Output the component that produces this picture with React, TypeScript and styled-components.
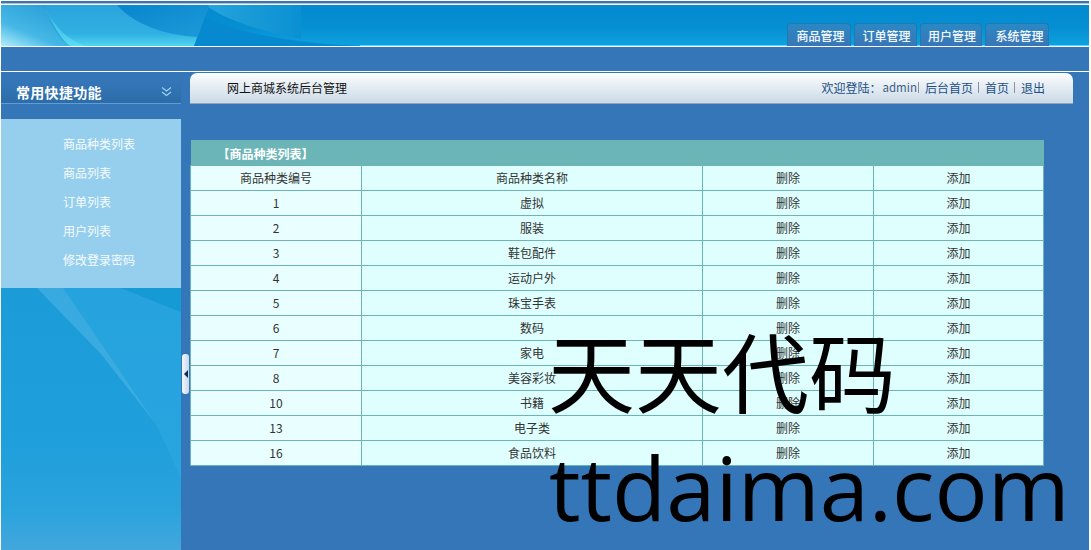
import React from 'react';
import styled, { createGlobalStyle } from 'styled-components';

const GlobalStyle = createGlobalStyle`
  html, body {
    margin: 0;
    padding: 0;
    background: #fff;
  }
  body {
    font-family: "Noto Sans CJK SC", "Open Sans", sans-serif;
    font-size: 12px;
  }
`;

const Page = styled.div`
  position: relative;
  width: 1088px;
  height: 550px;
  margin-left: 1px;
  overflow: hidden;
  background: #3476b8;
  display: flex;
  flex-direction: column;
`;

const TopEdge = styled.div`
  height: 1px;
  margin: 3px -1px 1px;
  background: #bdbdbd;
  box-shadow: 0 -3px 0 #fff, 0 1px 0 #fff;
`;

const Banner = styled.div`
  position: relative;
  height: 41px;
  flex: none;
  background: linear-gradient(#0489cf 0%, #058fd3 55%, #0fa2de 100%);
  border-bottom: 1px solid #fff;
  display: flex;
  justify-content: flex-end;
  align-items: flex-end;
  padding-right: 40px;
  gap: 3px;
`;

const BannerArt = styled.svg`
  position: absolute;
  left: 0;
  top: 0;
  width: 360px;
  height: 41px;
`;

const BannerGlow = styled.div`
  position: absolute;
  left: 359px;
  right: 0;
  bottom: 0;
  height: 1px;
  background: #5fd0f5;
`;

const NavTab = styled.a<{ $w: number; $shift: number }>`
  position: relative;
  width: ${p => p.$w}px;
  height: 23px;
  box-sizing: border-box;
  border: 1px solid #1a7cb6;
  border-bottom: 0;
  border-radius: 4px 4px 0 0;
  padding-left: ${p => p.$shift}px;
  background: linear-gradient(#2a88c4, #3a76b6);
  color: #fff;
  font-size: 12px;
  line-height: 24px;
  text-align: center;
  text-shadow: 0 0 1px rgba(255, 255, 255, 0.5);
`;

const SubBand = styled.div`
  height: 24px;
  flex: none;
  border-bottom: 1px solid #fff;
`;

const Body = styled.div`
  flex: 1;
  min-height: 0;
  display: grid;
  grid-template-columns: 180px 9px 1fr;
`;

const Sidebar = styled.aside`
  display: flex;
  flex-direction: column;
`;

const SideHead = styled.div`
  height: 32px;
  flex: none;
  display: flex;
  align-items: center;
  justify-content: space-between;
  padding: 8px 9px 0 15px;
  box-sizing: border-box;
  background: linear-gradient(#3476b8 30%, #2c6ca8 100%);
  border-bottom: 1px solid #5b9fd6;
`;

const SideTitle = styled.span`
  color: #fff;
  font-size: 14px;
  font-weight: 700;
  line-height: 20px;
  letter-spacing: 0.3px;
`;

const SideGap = styled.div`
  height: 15px;
  flex: none;
`;

const Menu = styled.ul`
  list-style: none;
  margin: 0;
  padding: 10px 0 0 62px;
  height: 169px;
  box-sizing: border-box;
  flex: none;
  background: #96cfee;
`;

const MenuItem = styled.li`
  height: 29px;
  line-height: 29px;
  color: #f7fcff;
  font-size: 12px;
`;

const SideArt = styled.div`
  flex: 1;
  position: relative;
  background: linear-gradient(#1b9cd9 0%, #1f9fdc 60%, #2ba3dd 85%, #43a7dd 100%);
`;

const SideArtSvg = styled.svg`
  position: absolute;
  left: 0;
  top: 0;
  width: 180px;
  height: 262px;
`;

const Splitter = styled.div`
  padding: 282px 0 0 1px;
`;

const Handle = styled.div`
  width: 7px;
  height: 40px;
  border-radius: 3px;
  background: linear-gradient(90deg, #f4f7fc, #c9d8ec);
  display: flex;
  align-items: center;
  justify-content: center;
`;

const Content = styled.main`
  padding-top: 1px;
  display: flex;
  flex-direction: column;
  align-items: flex-start;
`;

const TitleBar = styled.div`
  width: 883px;
  height: 31px;
  flex: none;
  box-sizing: border-box;
  border-radius: 7px 7px 0 0;
  border-bottom: 1px solid #8fa5bb;
  background: linear-gradient(#fbfdfd, #cbdae7);
  display: flex;
  align-items: center;
  justify-content: space-between;
  padding: 0 28px 2px 37px;
`;

const SiteName = styled.span`
  color: #111;
  font-size: 12px;
`;

const UserLinks = styled.div`
  display: flex;
  align-items: center;
  color: #1d4f86;
  font-size: 12px;
  white-space: nowrap;
`;

const UserName = styled.span`
  color: #3f5f88;
  font-size: 11.5px;
  margin-left: 1px;
`;

const Sep = styled.span<{ $tight?: boolean }>`
  width: 1px;
  height: 11px;
  background: #8c8f9e;
  margin: 0 6px 0 ${p => (p.$tight ? '1px' : '5px')};
`;

const Grid = styled.table`
  width: 853px;
  margin-top: 36px;
  border-collapse: collapse;
  table-layout: fixed;
  color: #333;
  font-size: 12px;
`;

const CaptionCell = styled.th`
  height: 25px;
  padding: 2px 0 0 27px;
  box-sizing: border-box;
  text-align: left;
  background: #6cb5b6;
  color: #fff;
  font-size: 12px;
  font-weight: 700;
`;

const Cell = styled.td<{ $first?: boolean }>`
  height: 25px;
  padding: 0;
  box-sizing: border-box;
  text-align: center;
  border: 1px solid #6cb5b6;
  background: ${p => (p.$first ? '#e9ffff' : '#dfffff')};
`;

const Watermark = styled.div`
  position: absolute;
  left: 547px;
  top: 313px;
  color: #000;
  pointer-events: none;
  white-space: nowrap;
`;

const WatermarkCn = styled.div`
  font-family: "Noto Sans CJK SC", sans-serif;
  font-size: 87px;
  line-height: 112px;
`;

const WatermarkEn = styled.div`
  font-family: "Open Sans", sans-serif;
  font-size: 88.5px;
  line-height: 123px;
  margin-left: 1px;
`;

const tabs = [
  { label: '商品管理', w: 64, shift: 3 },
  { label: '订单管理', w: 63, shift: 2 },
  { label: '用户管理', w: 62, shift: 2 },
  { label: '系统管理', w: 64, shift: 5 },
];

const menu = ['商品种类列表', '商品列表', '订单列表', '用户列表', '修改登录密码'];

const rows: [string, string][] = [
  ['1', '虚拟'],
  ['2', '服装'],
  ['3', '鞋包配件'],
  ['4', '运动户外'],
  ['5', '珠宝手表'],
  ['6', '数码'],
  ['7', '家电'],
  ['8', '美容彩妆'],
  ['10', '书籍'],
  ['13', '电子类'],
  ['16', '食品饮料'],
];

export default function App() {
  return (
    <>
      <GlobalStyle />
      <Page>
        <TopEdge />
        <Banner>
          <BannerArt viewBox="0 0 360 41" preserveAspectRatio="none">
            <defs>
              <linearGradient id="sweep" x1="0" y1="0" x2="0" y2="1">
                <stop offset="0" stopColor="#2aa4dc" />
                <stop offset="0.7" stopColor="#30b0e2" />
                <stop offset="1" stopColor="#52d4f0" />
              </linearGradient>
              <linearGradient id="corner" x1="0.7" y1="0" x2="0" y2="1">
                <stop offset="0" stopColor="#2a9fd8" />
                <stop offset="0.6" stopColor="#45b8e6" />
                <stop offset="1" stopColor="#b4eef9" />
              </linearGradient>
              <linearGradient id="fade" x1="0" y1="0" x2="1" y2="0">
                <stop offset="0" stopColor="#26a4dc" />
                <stop offset="1" stopColor="#0a90d2" />
              </linearGradient>
              <linearGradient id="dark" x1="0" y1="0" x2="1" y2="1">
                <stop offset="0" stopColor="#0886cd" />
                <stop offset="1" stopColor="#1d9ad8" />
              </linearGradient>
            </defs>
            <path d="M204 0H300V34C262 26 230 18 204 0Z" fill="url(#fade)" />
            <path d="M0 0H208L193 41H70C60 36 52 18 44 0Z" fill="url(#sweep)" />
            <path d="M0 0H44C48 16 56 32 68 41H0Z" fill="url(#corner)" />
            <path d="M44 0C50 15 58 30 84 41H68C56 30 48 16 44 0Z" fill="#6fe6f6" opacity="0.45" />
            <path d="M116 0C132 18 160 30 197 32L208 0Z" fill="url(#dark)" />
            <path d="M204 13C240 28 290 38 360 41H193Z" fill="#0689cf" />
          </BannerArt>
          <BannerGlow />
          {tabs.map(t => (
            <NavTab key={t.label} $w={t.w} $shift={t.shift}>{t.label}</NavTab>
          ))}
        </Banner>
        <SubBand />
        <Body>
          <Sidebar>
            <SideHead>
              <SideTitle>常用快捷功能</SideTitle>
              <svg width="11" height="11" viewBox="0 0 11 11" fill="none" stroke="#9fd3f2" strokeWidth="1.2">
                <path d="M1 1.5 5.5 5 10 1.5" />
                <path d="M1 6 5.5 9.5 10 6" />
              </svg>
            </SideHead>
            <SideGap />
            <Menu>
              {menu.map(m => (
                <MenuItem key={m}>{m}</MenuItem>
              ))}
            </Menu>
            <SideArt>
              <SideArtSvg viewBox="0 0 180 262" preserveAspectRatio="none">
                <path d="M62 0H120L180 24V190L155 136Z" fill="#2fa9e2" opacity="0.55" />
                <path d="M120 0 180 24V0Z" fill="#159ad6" />
                <path d="M36 0H62L155 136 100 66Z" fill="#5fbde6" opacity="0.45" />
              </SideArtSvg>
            </SideArt>
          </Sidebar>
          <Splitter>
            <Handle>
              <svg width="4" height="8" viewBox="0 0 4 8">
                <path d="M4 0V8L0 4Z" fill="#0c2f5c" />
              </svg>
            </Handle>
          </Splitter>
          <Content>
            <TitleBar>
              <SiteName>网上商城系统后台管理</SiteName>
              <UserLinks>
                欢迎登陆：<UserName>admin</UserName>
                <Sep $tight />
                后台首页
                <Sep />
                首页
                <Sep />
                退出
              </UserLinks>
            </TitleBar>
            <Grid>
              <colgroup>
                <col style={{ width: 171 }} />
                <col style={{ width: 341 }} />
                <col style={{ width: 171 }} />
                <col style={{ width: 170 }} />
              </colgroup>
              <thead>
                <tr>
                  <CaptionCell colSpan={4}>【商品种类列表】</CaptionCell>
                </tr>
              </thead>
              <tbody>
                <tr>
                  <Cell $first>商品种类编号</Cell>
                  <Cell>商品种类名称</Cell>
                  <Cell>删除</Cell>
                  <Cell>添加</Cell>
                </tr>
                {rows.map(([id, name]) => (
                  <tr key={id}>
                    <Cell $first>{id}</Cell>
                    <Cell>{name}</Cell>
                    <Cell>删除</Cell>
                    <Cell>添加</Cell>
                  </tr>
                ))}
              </tbody>
            </Grid>
          </Content>
        </Body>
        <Watermark>
          <WatermarkCn>天天代码</WatermarkCn>
          <WatermarkEn>ttdaima.com</WatermarkEn>
        </Watermark>
      </Page>
    </>
  );
}
